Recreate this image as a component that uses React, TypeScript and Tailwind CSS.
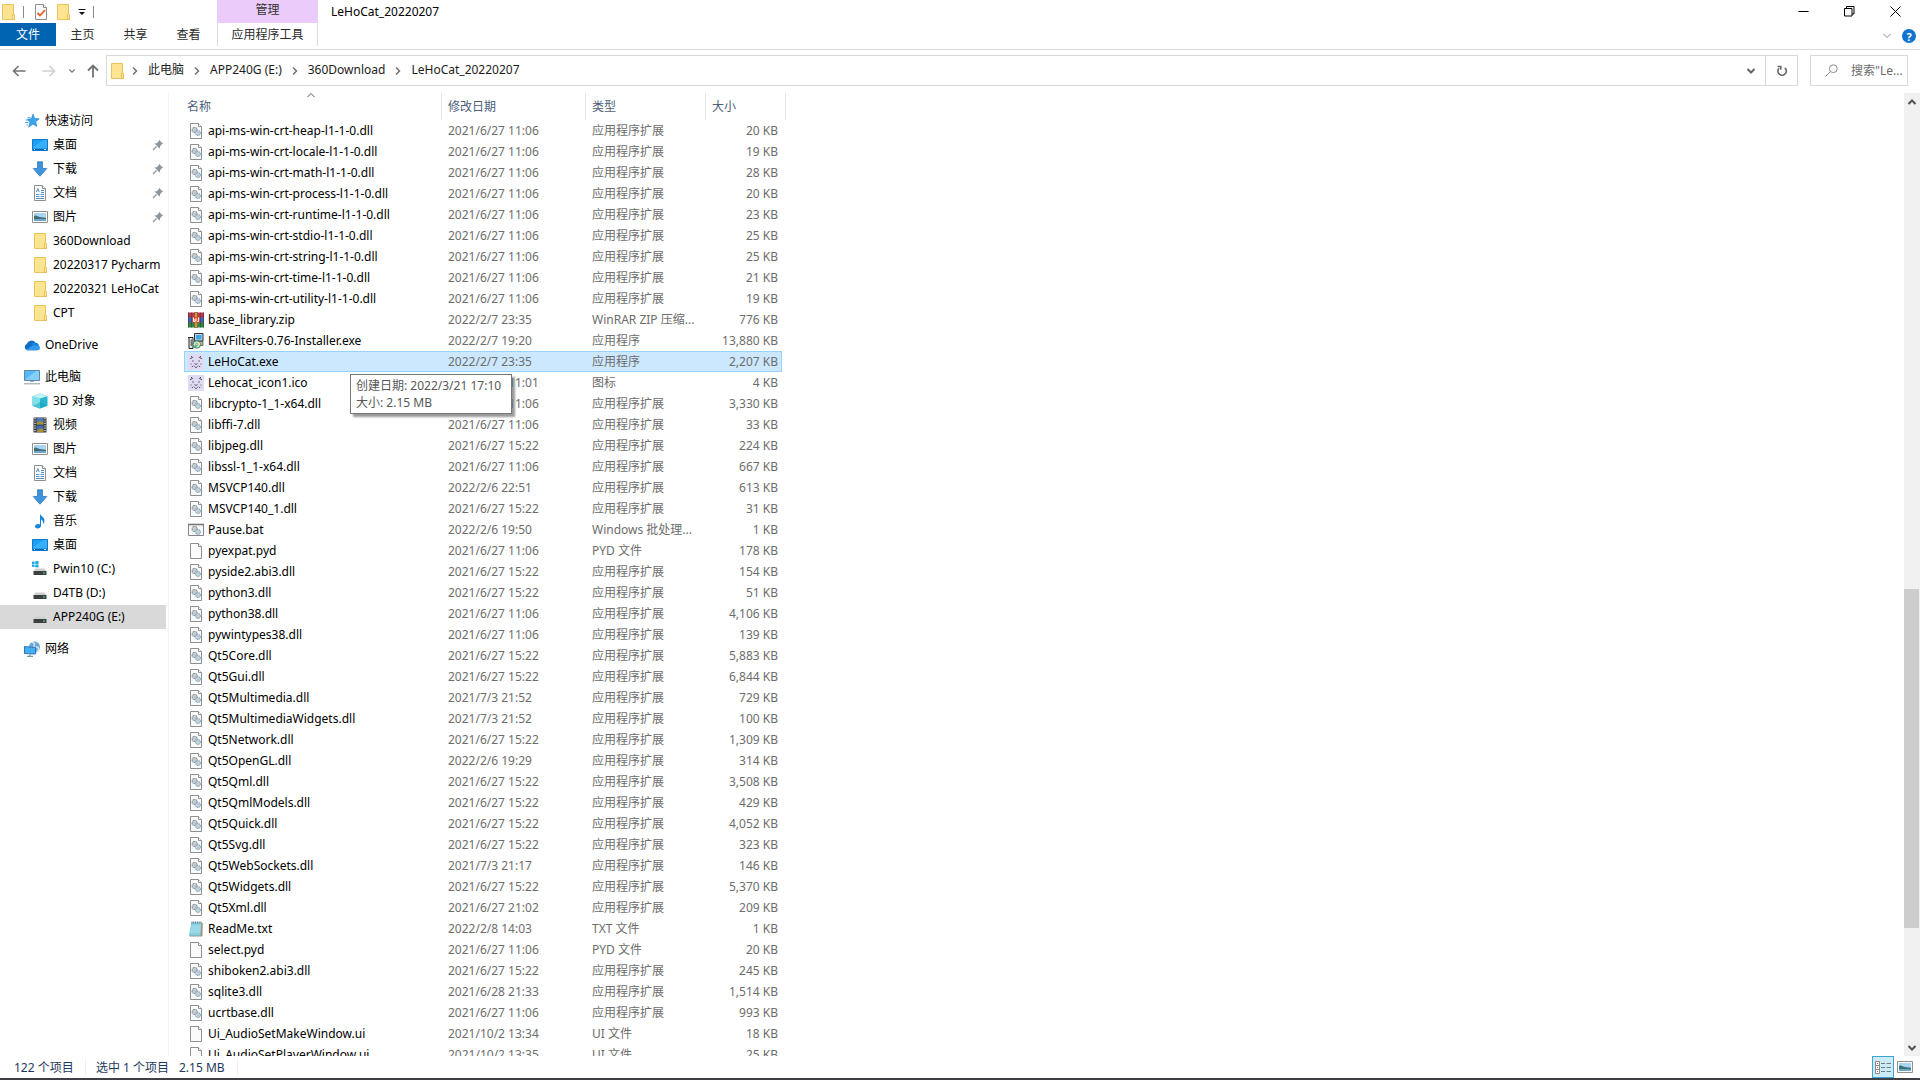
import React from "react";

type Kind = "dll" | "zip" | "inst" | "cat" | "bat" | "file" | "txt";
type Row = [Kind, string, string, string, string];

const EXT = "应用程序扩展";

const files: Row[] = [
  ["dll", "api-ms-win-crt-heap-l1-1-0.dll", "2021/6/27 11:06", EXT, "20 KB"],
  ["dll", "api-ms-win-crt-locale-l1-1-0.dll", "2021/6/27 11:06", EXT, "19 KB"],
  ["dll", "api-ms-win-crt-math-l1-1-0.dll", "2021/6/27 11:06", EXT, "28 KB"],
  ["dll", "api-ms-win-crt-process-l1-1-0.dll", "2021/6/27 11:06", EXT, "20 KB"],
  ["dll", "api-ms-win-crt-runtime-l1-1-0.dll", "2021/6/27 11:06", EXT, "23 KB"],
  ["dll", "api-ms-win-crt-stdio-l1-1-0.dll", "2021/6/27 11:06", EXT, "25 KB"],
  ["dll", "api-ms-win-crt-string-l1-1-0.dll", "2021/6/27 11:06", EXT, "25 KB"],
  ["dll", "api-ms-win-crt-time-l1-1-0.dll", "2021/6/27 11:06", EXT, "21 KB"],
  ["dll", "api-ms-win-crt-utility-l1-1-0.dll", "2021/6/27 11:06", EXT, "19 KB"],
  ["zip", "base_library.zip", "2022/2/7 23:35", "WinRAR ZIP 压缩...", "776 KB"],
  ["inst", "LAVFilters-0.76-Installer.exe", "2022/2/7 19:20", "应用程序", "13,880 KB"],
  ["cat", "LeHoCat.exe", "2022/2/7 23:35", "应用程序", "2,207 KB"],
  ["cat", "Lehocat_icon1.ico", "2021/6/28 11:01", "图标", "4 KB"],
  ["dll", "libcrypto-1_1-x64.dll", "2021/6/27 11:06", EXT, "3,330 KB"],
  ["dll", "libffi-7.dll", "2021/6/27 11:06", EXT, "33 KB"],
  ["dll", "libjpeg.dll", "2021/6/27 15:22", EXT, "224 KB"],
  ["dll", "libssl-1_1-x64.dll", "2021/6/27 11:06", EXT, "667 KB"],
  ["dll", "MSVCP140.dll", "2022/2/6 22:51", EXT, "613 KB"],
  ["dll", "MSVCP140_1.dll", "2021/6/27 15:22", EXT, "31 KB"],
  ["bat", "Pause.bat", "2022/2/6 19:50", "Windows 批处理...", "1 KB"],
  ["file", "pyexpat.pyd", "2021/6/27 11:06", "PYD 文件", "178 KB"],
  ["dll", "pyside2.abi3.dll", "2021/6/27 15:22", EXT, "154 KB"],
  ["dll", "python3.dll", "2021/6/27 15:22", EXT, "51 KB"],
  ["dll", "python38.dll", "2021/6/27 11:06", EXT, "4,106 KB"],
  ["dll", "pywintypes38.dll", "2021/6/27 11:06", EXT, "139 KB"],
  ["dll", "Qt5Core.dll", "2021/6/27 15:22", EXT, "5,883 KB"],
  ["dll", "Qt5Gui.dll", "2021/6/27 15:22", EXT, "6,844 KB"],
  ["dll", "Qt5Multimedia.dll", "2021/7/3 21:52", EXT, "729 KB"],
  ["dll", "Qt5MultimediaWidgets.dll", "2021/7/3 21:52", EXT, "100 KB"],
  ["dll", "Qt5Network.dll", "2021/6/27 15:22", EXT, "1,309 KB"],
  ["dll", "Qt5OpenGL.dll", "2022/2/6 19:29", EXT, "314 KB"],
  ["dll", "Qt5Qml.dll", "2021/6/27 15:22", EXT, "3,508 KB"],
  ["dll", "Qt5QmlModels.dll", "2021/6/27 15:22", EXT, "429 KB"],
  ["dll", "Qt5Quick.dll", "2021/6/27 15:22", EXT, "4,052 KB"],
  ["dll", "Qt5Svg.dll", "2021/6/27 15:22", EXT, "323 KB"],
  ["dll", "Qt5WebSockets.dll", "2021/7/3 21:17", EXT, "146 KB"],
  ["dll", "Qt5Widgets.dll", "2021/6/27 15:22", EXT, "5,370 KB"],
  ["dll", "Qt5Xml.dll", "2021/6/27 21:02", EXT, "209 KB"],
  ["txt", "ReadMe.txt", "2022/2/8 14:03", "TXT 文件", "1 KB"],
  ["file", "select.pyd", "2021/6/27 11:06", "PYD 文件", "20 KB"],
  ["dll", "shiboken2.abi3.dll", "2021/6/27 15:22", EXT, "245 KB"],
  ["dll", "sqlite3.dll", "2021/6/28 21:33", EXT, "1,514 KB"],
  ["dll", "ucrtbase.dll", "2021/6/27 11:06", EXT, "993 KB"],
  ["file", "Ui_AudioSetMakeWindow.ui", "2021/10/2 13:34", "UI 文件", "18 KB"],
  ["file", "Ui_AudioSetPlayerWindow.ui", "2021/10/2 13:35", "UI 文件", "25 KB"],
];

const Svg = ({ children }: { children: React.ReactNode }) => (
  <svg className="size-4 shrink-0" viewBox="0 0 16 16" fill="none" aria-hidden="true">
    {children}
  </svg>
);

const Folder = () => (
  <Svg>
    <path d="M2.5.5h11v9.5l1 .8v4.7h-12z" fill="#fee391" stroke="#e8c35c" />
    <path d="M12.5 10.2h1.2l.8.8v4.5h-2z" fill="#ffe9a6" stroke="#e3b84e" strokeWidth=".8" />
  </Svg>
);

const Page = () => (
  <>
    <path d="M2.5.5h8l3 3v12h-11z" fill="#fafbfc" stroke="#8f8f8f" />
    <path d="M10.5.5v3h3" fill="#fff" stroke="#8f8f8f" />
  </>
);

const Gears = () => (
  <>
    <circle cx="6.6" cy="7" r="2.5" fill="#e3e8eb" stroke="#7f8b94" strokeWidth="1.2" strokeDasharray="1.2 .4" />
    <circle cx="6.6" cy="7" r=".9" fill="#fff" stroke="#7f8b94" strokeWidth=".6" />
    <circle cx="10" cy="10" r="2.3" fill="#d5e6f0" stroke="#8aa6b8" strokeWidth="1.2" strokeDasharray="1.1 .4" />
    <circle cx="10" cy="10" r=".8" fill="#fff" stroke="#8aa6b8" strokeWidth=".5" />
  </>
);

const Cat = () => (
  <Svg>
    <rect width="16" height="16" fill="#e0dbf3" />
    <path
      d="M3.500 2v1.600M2 4.500h1.500M5 4l-.8-1.200M12.500 2v1.600M14 4.500h-1.500M11 4l.8-1.200M4.200 7h1.600M10.200 7h1.600M2.500 10h1M12.500 10h1M3.800 12.500h1.200M11 12.500h1.200M6.500 9.500l1.500 1 1.500-1M5.800 11.500l1 1.200M10.200 11.500l-1 1.200M7.200 13.500h1.600"
      stroke="#595468"
    />
  </Svg>
);

const FileIcon = ({ kind }: { kind: Kind }) => {
  if (kind === "dll")
    return (
      <Svg>
        <Page />
        <Gears />
      </Svg>
    );
  if (kind === "file")
    return (
      <Svg>
        <Page />
      </Svg>
    );
  if (kind === "cat") return <Cat />;
  if (kind === "bat")
    return (
      <Svg>
        <path d="M.5 2.500h15v11H.5z" fill="#f7f9fa" stroke="#858585" />
        <path d="M0 2.500h16" stroke="#777" strokeWidth="1.600" />
        <Gears />
      </Svg>
    );
  if (kind === "zip")
    return (
      <Svg>
        <path d="M0 .5h16v5H0z" fill="#b8344a" />
        <path d="M0 5.500h16v5H0z" fill="#3568c8" />
        <path d="M0 10.500h16v5H0z" fill="#2a8a45" />
        <path d="M0 5.500h16M0 10.500h16M.5.5v15M3.500.5v15M12.500.5v15M15.500.5v15" stroke="#4b2c33" strokeWidth=".5" />
        <path d="M6.500.5h3v15h-3z" fill="#d09a45" stroke="#6b4a1f" strokeWidth=".5" />
        <path d="M4 5h8v5.500H4z" fill="#d8482e" />
        <path d="M5.500 5.500v4h1.500V7M8 6v3.500M10.500 5.500v4H9.200" stroke="#fff" />
      </Svg>
    );
  if (kind === "inst")
    return (
      <Svg>
        <path d="M6.500.5h8.500v7.500h-8.500z" fill="#c9d3dc" stroke="#333" />
        <path d="M8 2h5.500v4.500H8z" fill="#35a7ea" />
        <path d="M11 8.500h4v4h-3z" fill="#a9b4be" stroke="#444" strokeWidth=".7" />
        <path d="M1 4.500h4v11H1zM0 4.500h2" fill="#e5e5e5" stroke="#222" />
        <path d="M3.200 6.500v6.500" stroke="#444" />
        <circle cx="8.800" cy="11.500" r="3.700" fill="#b9ecc6" stroke="#35625b" strokeWidth=".8" />
        <path d="M8.800 11.500l2.800-2.200a3.700 3.700 0 0 1 .5 3z" fill="#f4e86d" />
        <path d="M8.800 11.500l-3 1.800a3.500 3.500 0 0 0 2.600 1.700z" fill="#3dbb70" />
        <circle cx="8.800" cy="11.500" r="1" fill="#fff" stroke="#555" strokeWidth=".5" />
      </Svg>
    );
  return (
    <Svg>
      <path d="M3.500 2h10.700v13.500H1.500z" fill="#8f9a86" />
      <path d="M3.500 1.500h10L12.500 14.500H.8z" fill="#86cfe2" />
      <path d="M3.300 5h9.400M3 7h9.500M2.600 9h9.700M2.300 11h9.800" stroke="#b9e6f1" strokeWidth=".8" />
      <path d="M3.500 1.500h10.500" stroke="#5b7d86" strokeWidth="1.800" strokeDasharray="1 .8" />
      <path d="M14.500 2l-.5 13" stroke="#b79a62" strokeWidth=".8" />
    </Svg>
  );
};

const Desktop = () => (
  <Svg>
    <path d="M.5 2.500h15v11H.5z" fill="#1a9ff2" stroke="#1477c9" />
    <path d="M1 10L12 3h3v8H1z" fill="#36b0fb" />
    <path d="M1 12.500h14" stroke="#0b63b0" />
    <path d="M2 12.500h1M12 12.500h2" stroke="#bfe4ff" />
  </Svg>
);
const Download = () => (
  <Svg>
    <path d="M5.500.8h5v6.700h4.300L8 15.200 1.200 7.500h4.300z" fill="#3f93de" stroke="#2f7cc4" strokeWidth=".8" />
  </Svg>
);
const Doc = () => (
  <Svg>
    <Page />
    <path d="M4.500 7l1.300-3.500L7.200 7M9 5.500h3M9 7.500h3M4 9.500h3.500M8.500 9.500H12M4 11.500h3.500M8.500 11.500H12M4 13.500h8" stroke="#3a86c8" strokeWidth=".9" />
  </Svg>
);
const Picture = () => (
  <Svg>
    <path d="M.5 2.500h15v11H.5z" fill="#fff" stroke="#8f8f8f" />
    <path d="M2 4h12v8H2z" fill="#a9d4f3" />
    <path d="M2 7c2-1.500 4 .5 6 1s4 .2 6 1v1.500H2z" fill="#3d6f73" />
    <path d="M2 10h12v2H2z" fill="#6ba6cc" />
  </Svg>
);
const Star = () => (
  <Svg>
    <path d="M9 1.200l1.600 4.300 4.600.3-3.600 3 1.200 4.700L9 11l-4.300 3.200L6 9.200 3.300 6.300l4.200-.5z" fill="#3aa5ec" stroke="#1f82cf" strokeWidth=".7" />
    <path d="M3.500 4.500h3M1.500 7h2.500M1 9.500h3.500M2.500 12h1.500" stroke="#58aee8" />
  </Svg>
);
const Cloud = () => (
  <Svg>
    <path d="M3.300 13.200A3.300 3.300 0 0 1 2.700 7a5 5 0 0 1 8.800-1.300A4 4 0 0 1 13 13.200z" fill="#0f6cc4" />
    <path d="M2 12.700l7-4.400c3-1.900 7 0 7 2.500a2.500 2.500 0 0 1-2.500 2.500H3.500z" fill="#2f9ceb" />
    <path d="M6 6.500l5-.8c2 0 3.300 1.300 3.600 3L9 8.300z" fill="#1683d8" />
  </Svg>
);
const Computer = () => (
  <Svg>
    <path d="M.5 1.500h15v10H.5z" fill="#56b9f5" stroke="#5f87a3" />
    <path d="M1 11L12 2h3v9z" fill="#83cffa" />
    <path d="M6 12.500h4" stroke="#9fb1bd" />
    <path d="M0 14.800h16" stroke="#8a9aa6" />
  </Svg>
);
const Cube = () => (
  <Svg>
    <path d="M8 .5l7.500 2.700v9.600L8 15.500.5 12.800V3.200z" fill="#27b6cd" />
    <path d="M.5 3.200L8 5.500v10L.5 12.800z" fill="#7fe0ea" />
    <path d="M8 .5l7.500 2.700L8 5.500.5 3.200z" fill="#c2f1f6" />
    <path d="M5 11l3-2 7.500 3.800L8 15.500.5 12.800z" fill="#1aa0bd" opacity=".5" />
  </Svg>
);
const Video = () => (
  <Svg>
    <path d="M1.500.5h13v15h-13z" fill="#333" />
    <path d="M4.500 1h7v6.500h-7z" fill="#4d78c0" />
    <path d="M4.500 8.500h7V15h-7z" fill="#3f6cb5" />
    <path d="M4.500 6l3-2 4 1v2.500h-7zM5 13.500l3-2 3.500.5v3H5z" fill="#a98f36" />
    <path d="M3 1v14M13 1v14" stroke="#e6e6e6" strokeWidth="1.300" strokeDasharray="1.200 1.200" />
  </Svg>
);
const Music = () => (
  <Svg>
    <path d="M8 .5c.5 3 4.500 3.500 4.500 7 0 1.500-.5 2.500-1.500 3.500.5-3-.8-4-2-4.500v6c0 1.800-1.500 3-3.300 3-1.600 0-2.700-.8-2.700-2s1.300-2.500 3-2.500c.8 0 1.500.2 2 .5z" fill="#1487db" />
  </Svg>
);
const Disk = ({ win }: { win?: boolean }) => (
  <Svg>
    {win && <path d="M0 .8l2.600-.4v2.500H0zM3.300.3L6.500 0v2.900H3.300zM0 3.600h2.600v2.500L0 5.800zM3.300 3.600h3.200v3l-3.200-.4z" fill="#19a9e6" />}
    <path d="M3.500 7.500h9l2 3h-13z" fill="#cfcfcf" />
    <path d="M1.500 10h13v4h-13z" fill="#3d4043" />
    <path d="M11 12h2" stroke="#4dea6a" strokeWidth="1.200" />
  </Svg>
);
const Network = () => (
  <Svg>
    <circle cx="10.500" cy="6" r="5.500" fill="#6da6cf" />
    <path d="M8 1.500c3 0 3 2 2 3s1 2 3 1.500 2 3 0 5" stroke="#cfe6f4" strokeWidth="1.400" />
    <path d="M.5 5.500l11 1v6.500l-11-.5z" fill="#45aef2" stroke="#2b79b5" />
    <path d="M6 13v2M3 15.300h6" stroke="#5b7f99" />
  </Svg>
);
const Pin = () => (
  <svg className="ml-auto size-3 shrink-0" viewBox="0 0 12 12" fill="none" aria-hidden="true">
    <path d="M7 .8L11.200 5l-1.400.3L8 7.200l-.2 2.600L2.500 4.400l2.400-.2L6.700 2.300z" fill="#8d959c" />
    <path d="M4.500 7.500L1 11" stroke="#8d959c" strokeWidth="1.200" />
  </svg>
);

const Chevron = ({ d, cls }: { d: string; cls: string }) => (
  <svg className={cls} viewBox="0 0 10 10" fill="none" stroke="currentColor" aria-hidden="true">
    <path d={d} />
  </svg>
);
const RIGHT = "M3 1.500L6.500 5 3 8.500";
const DOWN = "M1.500 3L5 6.500 8.500 3";
const UP = "M1.500 7L5 3.500 8.500 7";

type Nav = { icon: React.ReactNode; label: string; pin?: boolean; current?: boolean; top?: boolean };

const groups: Nav[][] = [
  [
    { icon: <Star />, label: "快速访问", top: true },
    { icon: <Desktop />, label: "桌面", pin: true },
    { icon: <Download />, label: "下载", pin: true },
    { icon: <Doc />, label: "文档", pin: true },
    { icon: <Picture />, label: "图片", pin: true },
    { icon: <Folder />, label: "360Download" },
    { icon: <Folder />, label: "20220317 Pycharm" },
    { icon: <Folder />, label: "20220321 LeHoCat" },
    { icon: <Folder />, label: "CPT" },
  ],
  [{ icon: <Cloud />, label: "OneDrive", top: true }],
  [
    { icon: <Computer />, label: "此电脑", top: true },
    { icon: <Cube />, label: "3D 对象" },
    { icon: <Video />, label: "视频" },
    { icon: <Picture />, label: "图片" },
    { icon: <Doc />, label: "文档" },
    { icon: <Download />, label: "下载" },
    { icon: <Music />, label: "音乐" },
    { icon: <Desktop />, label: "桌面" },
    { icon: <Disk win />, label: "Pwin10 (C:)" },
    { icon: <Disk />, label: "D4TB (D:)" },
    { icon: <Disk />, label: "APP240G (E:)", current: true },
  ],
  [{ icon: <Network />, label: "网络", top: true }],
];

const TitleBar = () => (
  <header className="flex shrink-0 border-b border-[#dadbdc]">
    <div className="flex w-[217px] flex-col">
      <div className="flex h-[23px] items-center">
        <Folder />
        <span className="ml-[7px] h-3 w-px bg-[#8a8a8a]" />
        <button className="ml-[9px]" aria-label="属性">
          <Svg>
            <Page />
            <path d="M4.500 9l2.500 2.500 5-5.500" stroke="#e2622b" strokeWidth="1.800" />
          </Svg>
        </button>
        <button className="ml-[6px]" aria-label="新建文件夹">
          <Folder />
        </button>
        <button className="ml-[7px]" aria-label="自定义快速访问工具栏">
          <svg className="size-2" viewBox="0 0 8 8" aria-hidden="true">
            <path d="M.5 1h7v1h-7zM1 4h6L4 7z" fill="#111" />
          </svg>
        </button>
        <span className="ml-[7px] h-3 w-px bg-[#8a8a8a]" />
      </div>
      <nav className="mb-[3px] flex h-[23px] text-[#2b2b2b]">
        <button className="w-14 bg-[#0063b1] text-white">文件</button>
        <button className="w-[53px] pt-px">主页</button>
        <button className="w-[53px] pt-px">共享</button>
        <button className="w-[53px] pt-px">查看</button>
      </nav>
    </div>
    <div className="flex w-[101px] flex-col">
      <div className="flex h-[23px] items-center justify-center bg-[#eacbfa] pb-1 text-[#333]">管理</div>
      <button className="h-[23px] border-x border-[#dadbdc] pt-px text-[#2b2b2b]">应用程序工具</button>
    </div>
    <h1 className="h-[23px] pl-[13px] leading-[23px] text-black">LeHoCat_20220207</h1>
    <div className="ml-auto flex flex-col">
      <div className="flex h-[23px] items-center text-black">
        <button className="flex h-5 w-[45px] items-center justify-center" aria-label="最小化">
          <svg className="size-[11px]" viewBox="0 0 11 11" stroke="currentColor" fill="none"><path d="M.5 5.500h10" /></svg>
        </button>
        <button className="flex h-5 w-[46px] items-center justify-center" aria-label="还原">
          <svg className="size-[11px]" viewBox="0 0 11 11" stroke="currentColor" fill="none"><path d="M.5 2.500h7.500v7.500H.5zM2.500 2.500v-2h7.500v7.500H8" /></svg>
        </button>
        <button className="flex h-5 w-[46px] items-center justify-center" aria-label="关闭">
          <svg className="size-[11px]" viewBox="0 0 11 11" stroke="currentColor" fill="none"><path d="M.5.5l10 10M10.500.5l-10 10" /></svg>
        </button>
        <span className="w-[2px]" />
      </div>
      <div className="flex h-[26px] items-center justify-end gap-[6px] pr-1 text-[#8a8a8a]">
        <button className="p-1" aria-label="展开功能区">
          <Chevron d={DOWN} cls="size-[10px]" />
        </button>
        <button className="flex size-[14px] items-center justify-center rounded-full bg-[#0f73cf] text-[11px] font-bold leading-none text-white" aria-label="帮助">
          ?
        </button>
      </div>
    </div>
  </header>
);

const crumbs = ["此电脑", "APP240G (E:)", "360Download", "LeHoCat_20220207"];

const AddressBar = () => (
  <div className="flex shrink-0 items-center pr-3 pt-[5px] text-[#222]">
    <div className="flex w-[106px] items-center pl-3 text-[#737373]">
      <button aria-label="后退">
        <svg className="h-3 w-[14px]" viewBox="0 0 14 12" fill="none" stroke="currentColor" strokeWidth="1.600"><path d="M13.500 6H1.500M6.500 1L1.500 6l5 5" /></svg>
      </button>
      <button className="ml-4 text-[#d0d0d0]" aria-label="前进">
        <svg className="h-3 w-[14px]" viewBox="0 0 14 12" fill="none" stroke="currentColor" strokeWidth="1.600"><path d="M.5 6h12M7.500 1l5 5-5 5" /></svg>
      </button>
      <button className="ml-3" aria-label="最近浏览的位置">
        <Chevron d={DOWN} cls="size-2 stroke-[1.5]" />
      </button>
      <button className="ml-[11px]" aria-label="上移">
        <svg className="h-[14px] w-3" viewBox="0 0 12 14" fill="none" stroke="currentColor" strokeWidth="1.800"><path d="M6 13.500V1.500M1 6.500l5-5 5 5" /></svg>
      </button>
    </div>
    <div className="flex h-[31px] flex-1 items-center border border-[#d9d9d9]">
      <span className="ml-[2px] mr-[-3px] flex">
        <Folder />
      </span>
      {crumbs.map((c) => (
        <React.Fragment key={c}>
          <Chevron d={RIGHT} cls="ml-2 size-[10px] shrink-0 stroke-[1.5] text-[#707070]" />
          <a href="#" className="ml-2 whitespace-nowrap pb-[2px] text-[#1c1c1c]">
            {c}
          </a>
        </React.Fragment>
      ))}
      <button className="ml-auto flex h-full w-7 items-center justify-center text-[#666]" aria-label="上一个位置">
        <Chevron d={DOWN} cls="size-[10px] stroke-2" />
      </button>
      <button className="flex h-full w-8 items-center justify-center border-l border-[#d9d9d9] text-[#666]" aria-label="刷新">
        <svg className="size-3" viewBox="0 0 12 12" fill="none" stroke="currentColor" strokeWidth="1.600"><path d="M8.800 2.800A4.200 4.200 0 1 1 3 3.200M1.500 1.500h3.300v3.300" /></svg>
      </button>
    </div>
    <label className="ml-3 flex h-[31px] w-[98px] items-center border border-[#d9d9d9] pl-[14px]">
      <svg className="size-[13px] shrink-0" viewBox="0 0 13 13" fill="none" stroke="#8a8a8a" aria-hidden="true"><circle cx="8.300" cy="4.700" r="3.900" /><path d="M5.500 7.500l-5 5" /></svg>
      <input className="ml-[13px] w-[56px] min-w-0 bg-transparent outline-none placeholder:text-[#6b6b6b]" placeholder={'搜索"Le...'} aria-label="搜索" />
    </label>
  </div>
);

const Sidebar = () => (
  <aside className="w-[169px] shrink-0 overflow-hidden border-r border-[#f3f3f3] pt-4">
    {groups.map((g, i) => (
      <ul key={i} className="mb-2">
        {g.map((n) => (
          <li key={n.label}>
            <a
              href="#"
              className={`flex h-6 w-[166px] items-center gap-[5px] whitespace-nowrap pr-[2px] text-black ${n.top ? "pl-6" : "pl-8"} ${n.current ? "bg-[#d9d9d9]" : ""}`}
            >
              {n.icon}
              <span>{n.label}</span>
              {n.pin && <Pin />}
            </a>
          </li>
        ))}
      </ul>
    ))}
  </aside>
);

const FileTable = () => (
  <table className="w-[602px] table-fixed border-separate border-spacing-0 whitespace-nowrap">
    <colgroup>
      <col className="w-[258px]" />
      <col className="w-[144px]" />
      <col className="w-[120px]" />
      <col className="w-[76px]" />
      <col className="w-1" />
    </colgroup>
    <thead>
      <tr className="h-[27px] text-left text-[#4c607a]">
        <th className="relative border-r border-[#e5e5e5] p-0 pl-[3px] font-normal">
          名称
          <Chevron d={UP} cls="absolute left-[122px] top-[-3px] size-[10px] text-[#555]" />
        </th>
        <th className="border-r border-[#e5e5e5] p-0 pl-[6px] font-normal">修改日期</th>
        <th className="border-r border-[#e5e5e5] p-0 pl-[6px] font-normal">类型</th>
        <th className="p-0 pl-[6px] font-normal">大小</th>
        <th className="border-r border-[#e5e5e5] p-0" />
      </tr>
    </thead>
    <tbody>
      {files.map(([kind, name, date, type, size]) => {
        const sel = name === "LeHoCat.exe";
        const cell = sel ? "border-y border-[#99d1ff] bg-[#cce8ff]" : "";
        return (
          <tr key={name} className="h-[21px] text-[#6d6d6d]" aria-selected={sel}>
            <td className={`p-0 ${cell} ${sel ? "border-l pl-[3px]" : "pl-1"}`}>
              <span className="flex items-center gap-1 leading-4 text-black">
                <FileIcon kind={kind} />
                {name}
              </span>
            </td>
            <td className={`p-0 pl-[6px] leading-4 ${cell}`}>{date}</td>
            <td className={`p-0 pl-[6px] leading-4 ${cell}`}>{type}</td>
            <td className={`p-0 text-right leading-4 ${cell} ${sel ? "border-r pr-[3px]" : "pr-1"}`}>{size}</td>
            <td className="p-0" />
          </tr>
        );
      })}
    </tbody>
  </table>
);

export default function App() {
  return (
    <div className="flex h-screen flex-col overflow-hidden bg-white font-['Noto_Sans','Noto_Sans_CJK_SC',sans-serif] text-xs">
      <TitleBar />
      <AddressBar />
      <div className="mt-[7px] flex min-h-0 flex-1">
        <Sidebar />
        <main className="relative min-w-0 flex-1 overflow-hidden pl-[15px]">
          <FileTable />
          <div
            role="tooltip"
            className="absolute left-[181px] top-[281px] w-[162px] whitespace-nowrap border border-[#767676] bg-white px-[5px] py-[2px] leading-[17px] text-[#575757] shadow-[3px_3px_2px_rgba(0,0,0,0.4)]"
          >
            创建日期: 2022/3/21 17:10
            <br />
            大小: 2.15 MB
          </div>
        </main>
        <div className="flex w-4 shrink-0 flex-col items-center bg-[#f0f0f0] text-[#505050]">
          <button className="flex h-[17px] items-center" aria-label="向上滚动">
            <Chevron d={UP} cls="size-[10px] stroke-2" />
          </button>
          <div className="w-full flex-[479_1_0%]" />
          <div className="w-[15px] flex-[339_1_0%] self-start bg-[#cdcdcd]" />
          <div className="w-full flex-[111_1_0%]" />
          <button className="flex h-[17px] items-center" aria-label="向下滚动">
            <Chevron d={DOWN} cls="size-[10px] stroke-2" />
          </button>
        </div>
      </div>
      <footer className="flex h-[22px] shrink-0 items-center pl-[14px] text-[#1e395b]">
        <span className="w-[71px] pt-[2px]">122 个项目</span>
        <span className="h-4 w-px bg-[#f0f0f0]" />
        <span className="ml-[10px] w-[83px] pt-[2px]">选中 1 个项目</span>
        <span className="w-[58px] pt-[2px]">2.15 MB</span>
        <span className="h-4 w-px bg-[#f0f0f0]" />
        <button className="ml-auto flex h-[22px] w-[22px] items-center justify-center border border-[#3fa3d1] bg-[#cdeaf7]" aria-label="详细信息">
          <svg className="h-[13px] w-4" viewBox="0 0 16 13" fill="none" aria-hidden="true">
            <path d="M.5.5h4v12h-4zM.5 4.500h4M.5 8.500h4" fill="#fff" stroke="#8a8a8a" />
            <path d="M2 2.500h1M2 6.500h1M2 10.500h1" stroke="#c0504d" />
            <path d="M6 2.500h4M11.500 2.500h4.500M6 6.500h4M11.500 6.500h4.500M6 10.500h4M11.500 10.500h4.500" stroke="#6d7b84" />
          </svg>
        </button>
        <button className="ml-[3px] mr-[7px] flex w-4 justify-center" aria-label="大图标">
          <Picture />
        </button>
      </footer>
      <div className="h-[2px] shrink-0 bg-[#3f3f45]" />
    </div>
  );
}
